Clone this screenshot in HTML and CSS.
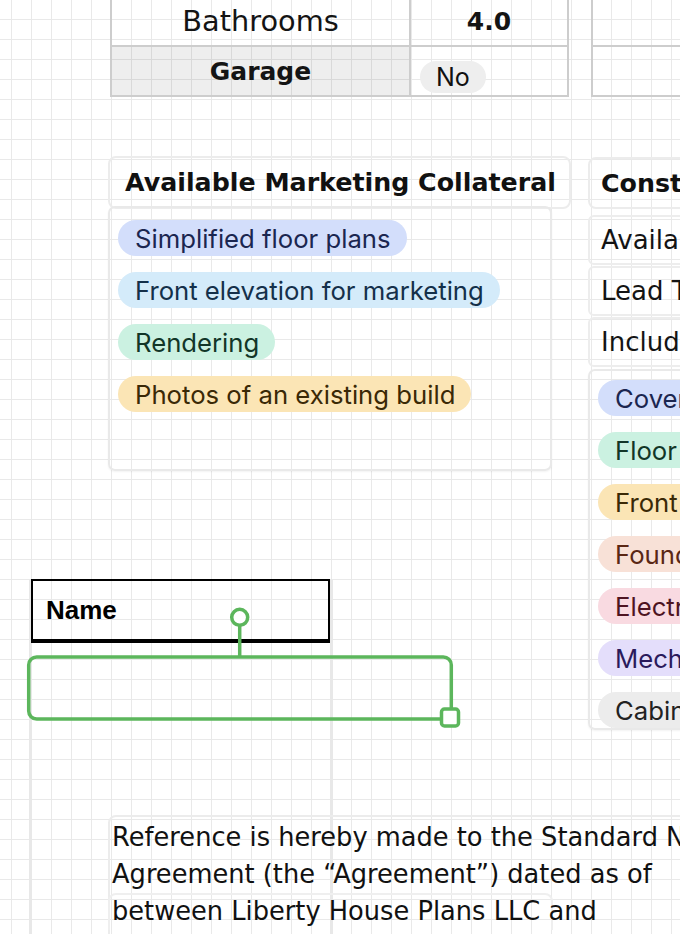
FILE: index.html
```html
<!DOCTYPE html>
<html lang="en">
<head>
<meta charset="utf-8">
<title>Plan sheet board</title>
<link rel="stylesheet" href="styles.css">
</head>
<body>
<main class="canvas">

  <div class="spec-table t-left">
    <div class="cell label">Bathrooms</div>
    <div class="cell value strong">4.0</div>
    <div class="cell label strong shaded">Garage</div>
    <div class="cell value chip-cell"><span class="chip">No</span></div>
  </div>

  <div class="spec-table t-right">
    <div class="cell label"></div>
    <div class="cell value"></div>
    <div class="cell label"></div>
    <div class="cell value"></div>
  </div>

  <section class="widget marketing">
    <h2 class="widget-title">Available Marketing Collateral</h2>
    <div class="tag-card">
      <span class="tag blue">Simplified floor plans</span>
      <span class="tag sky">Front elevation for marketing</span>
      <span class="tag mint">Rendering</span>
      <span class="tag yellow">Photos of an existing build</span>
    </div>
  </section>

  <section class="widget construction">
    <h2 class="widget-title">Construction Documents</h2>
    <div class="field">Availability</div>
    <div class="field">Lead Time</div>
    <div class="field">Included Sheets</div>
    <div class="tag-card">
      <span class="tag blue">Cover sheet</span>
      <span class="tag mint">Floor plans</span>
      <span class="tag yellow">Front elevation</span>
      <span class="tag peach">Foundation plan</span>
      <span class="tag pink">Electrical plan</span>
      <span class="tag lavender">Mechanical plan</span>
      <span class="tag gray">Cabinetry</span>
    </div>
  </section>

  <div class="name-col">
    <div class="name-head">Name</div>
  </div>

  <div class="note">
    <p class="line">Reference is hereby made to the Standard Non-Exclusive License</p>
    <p class="line">Agreement (the “Agreement”) dated as of</p>
    <p class="line boxed">between Liberty House Plans LLC and</p>
  </div>

  <svg class="selection" width="680" height="934" viewBox="0 0 680 934" aria-hidden="true">
    <rect x="28.7" y="657" width="422.6" height="62" rx="8" fill="none" stroke="#5cb65c" stroke-width="3.5"/>
    <line x1="239.7" y1="625" x2="239.7" y2="657" stroke="#5cb65c" stroke-width="3.5"/>
    <circle cx="239.7" cy="617.3" r="8" fill="#fff" stroke="#5cb65c" stroke-width="3.5"/>
    <rect x="441.5" y="709" width="17" height="17" rx="3" fill="#fff" stroke="#5cb65c" stroke-width="3.5"/>
  </svg>

</main>
</body>
</html>
```

FILE: styles.css
```css
* { box-sizing: border-box; }

html, body {
  margin: 0;
  padding: 0;
}

body {
  width: 680px;
  height: 934px;
  overflow: hidden;
  background-color: #ffffff;
  background-image:
    linear-gradient(to right, #e9e9e9 1px, transparent 1px),
    linear-gradient(to bottom, #e9e9e9 1px, transparent 1px);
  background-size: 20px 20px;
  background-position: 11px 19px;
  font-family: "DejaVu Sans", sans-serif;
  color: #141414;
}

.canvas {
  position: relative;
  width: 680px;
  height: 934px;
  overflow: hidden;
}

/* ---------- spec tables ---------- */
.spec-table {
  position: absolute;
  top: -5px;
  display: grid;
  grid-template-rows: 50px 48px;
  border: 2px solid #cdcdcd;
}

.t-left {
  left: 110px;
  width: 459px;
  grid-template-columns: 299px 1fr;
}

.t-right {
  left: 591px;
  width: 460px;
  grid-template-columns: 299px 1fr;
}

.cell {
  display: flex;
  align-items: center;
  justify-content: center;
  font-size: 28.8px;
  white-space: nowrap;
}

.cell:nth-child(1),
.cell:nth-child(2) {
  border-bottom: 2px solid #cdcdcd;
}

.cell.label {
  border-right: 2px solid #cdcdcd;
}

.cell.strong {
  font-weight: 700;
  font-size: 25px;
}

.cell.shaded {
  background: rgba(0, 0, 0, 0.065);
}

.chip-cell {
  justify-content: flex-start;
  align-items: flex-start;
  padding: 14px 0 0 9px;
}

.chip {
  display: inline-flex;
  align-items: center;
  height: 32px;
  padding: 0 16px;
  border-radius: 16px;
  background: #eeeeee;
  font-family: "Inter", "Liberation Sans", sans-serif;
  font-size: 25px;
  color: #111;
}

/* ---------- list widgets ---------- */
.widget {
  position: absolute;
  display: flex;
  flex-direction: column;
}

.widget-title {
  margin: 0;
  display: flex;
  align-items: center;
  height: 53px;
  border: 2px solid #ececec;
  border-radius: 8px;
  font-size: 25.3px;
  font-weight: 700;
  white-space: nowrap;
  color: #111;
}

.tag-card {
  display: flex;
  flex-direction: column;
  align-items: flex-start;
  gap: 16px;
  border: 2px solid #e9e9e9;
  border-radius: 7px;
  box-shadow: 0 1px 2px rgba(0, 0, 0, 0.05);
}

.tag {
  display: inline-flex;
  align-items: center;
  height: 36px;
  padding: 0 16px 0 17px;
  border-radius: 18px;
  font-family: "Inter", "Liberation Sans", sans-serif;
  font-size: 25.7px;
  white-space: nowrap;
}

.tag.blue { background: #d3defb; color: #1b2650; }
.tag.sky { background: #d4ebfa; color: #14304a; }
.tag.mint { background: #cbf1e1; color: #123628; }
.tag.yellow { background: #fbe5b5; color: #3a2906; }
.tag.peach { background: #f8e1d7; color: #5a2714; }
.tag.pink { background: #f9dae1; color: #4e1422; }
.tag.lavender { background: #e4defb; color: #2a1a5c; }
.tag.gray { background: #ececec; color: #222; }

.marketing {
  left: 108px;
  top: 156px;
  width: 463px;
}

.marketing .widget-title {
  padding-left: 15px;
}

.marketing .tag-card {
  width: 444px;
  height: 265px;
  margin-top: -3px;
  padding: 12px 8px;
}

.construction {
  left: 588px;
  top: 157px;
  width: 420px;
}

.construction .widget-title {
  height: 52px;
  padding-left: 11px;
}

.field {
  display: flex;
  align-items: center;
  height: 50px;
  margin-top: 1px;
  padding-left: 11px;
  border: 2px solid #ededed;
  border-radius: 6px;
  font-size: 26px;
  white-space: nowrap;
}

.construction .field:nth-of-type(1) {
  margin-top: 6px;
}

.construction .tag-card {
  margin-top: 2px;
  height: 361px;
  padding: 9px 8px 0;
}

/* ---------- name column ---------- */
.name-col {
  position: absolute;
  left: 29px;
  top: 579px;
  width: 304px;
  height: 400px;
  border-left: 3px solid #e8e8e8;
  border-right: 3px solid #e8e8e8;
}

.name-head {
  display: flex;
  align-items: center;
  width: 299px;
  height: 64px;
  margin-left: -1px;
  padding-left: 13px;
  border: 2px solid #000;
  border-bottom-width: 4px;
  font-family: "Liberation Sans", Arial, sans-serif;
  font-weight: 700;
  font-size: 26px;
  color: #000;
}

/* ---------- note ---------- */
.note {
  position: absolute;
  left: 108px;
  top: 815px;
  width: 640px;
  height: 160px;
  padding: 2px 2px;
  border: 2px solid #ececec;
  border-radius: 8px;
}

.line {
  margin: 0;
  height: 37px;
  line-height: 37px;
  font-size: 25.7px;
  white-space: nowrap;
  color: #111;
}

.line.boxed {
  width: 445px;
  margin-left: -4px;
  padding-left: 2px;
  border: 2px solid #efefef;
  border-bottom: none;
  border-radius: 8px 8px 0 0;
  line-height: 33px;
}

/* ---------- selection overlay ---------- */
.selection {
  position: absolute;
  left: 0;
  top: 0;
  pointer-events: none;
}
```
